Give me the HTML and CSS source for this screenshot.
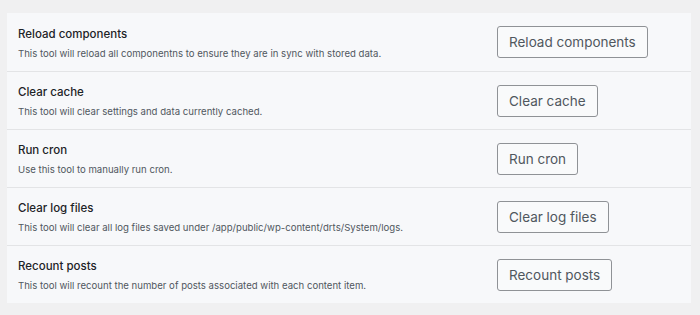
FILE: index.html
```html
<!DOCTYPE html>
<html lang="en">
<head>
    <meta charset="UTF-8">
    <meta name="viewport" content="width=device-width, initial-scale=1.0">
    <title>Tools</title>
    <link rel="stylesheet" href="styles.css">
</head>
<body>

    <div class="tools-panel">
        <div class="tool-row">
            <div class="tool-info">
                <h3 class="tool-title">Reload components</h3>
                <p class="tool-desc">This tool will reload all componentns to ensure they are in sync with stored data.</p>
            </div>
            <div class="tool-action">
                <button class="tool-button">Reload components</button>
            </div>
        </div>

        <div class="tool-row">
            <div class="tool-info">
                <h3 class="tool-title">Clear cache</h3>
                <p class="tool-desc">This tool will clear settings and data currently cached.</p>
            </div>
            <div class="tool-action">
                <button class="tool-button">Clear cache</button>
            </div>
        </div>

        <div class="tool-row">
            <div class="tool-info">
                <h3 class="tool-title">Run cron</h3>
                <p class="tool-desc">Use this tool to manually run cron.</p>
            </div>
            <div class="tool-action">
                <button class="tool-button">Run cron</button>
            </div>
        </div>

        <div class="tool-row">
            <div class="tool-info">
                <h3 class="tool-title">Clear log files</h3>
                <p class="tool-desc">This tool will clear all log files saved under /app/public/wp-content/drts/System/logs.</p>
            </div>
            <div class="tool-action">
                <button class="tool-button">Clear log files</button>
            </div>
        </div>

        <div class="tool-row">
            <div class="tool-info">
                <h3 class="tool-title">Recount posts</h3>
                <p class="tool-desc">This tool will recount the number of posts associated with each content item.</p>
            </div>
            <div class="tool-action">
                <button class="tool-button">Recount posts</button>
            </div>
        </div>
    </div>

</body>
</html>
```

FILE: styles.css
```css
:root {
    --page-bg: #f0f0f1;
    --panel-bg: #f7f8fa;
    --border-color: #e3e4e6;
    --text-color: #1d2327;
    --light-text-color: #50575e;
    --button-border: #8f9296;
    --font-family: Inter, "Noto Sans", Arial, sans-serif;
}
body, html {
    margin: 0;
    font-family: var(--font-family);
    background-color: var(--page-bg);
    color: var(--text-color);
}
body {
    padding: 13px 9px 12px 7px;
}
.tools-panel {
    background-color: var(--panel-bg);
}
.tool-row {
    display: grid;
    grid-template-columns: 1fr 194px;
    align-items: center;
    height: 58px;
    box-sizing: border-box;
    padding-left: 11px;
    border-top: 1px solid var(--border-color);
}
.tool-row:first-child {
    border-top: none;
}
.tool-title {
    margin: 1px 0 7px 0;
    font-size: 11.5px;
    font-weight: 500;
}
.tool-desc {
    margin: 0;
    font-size: 9.6px;
    color: var(--light-text-color);
}
.tool-button {
    height: 32px;
    padding: 0 11px;
    font-family: var(--font-family);
    font-size: 13.5px;
    color: #50575e;
    background-color: #f9fafb;
    border: 1px solid var(--button-border);
    border-radius: 3px;
}
```
